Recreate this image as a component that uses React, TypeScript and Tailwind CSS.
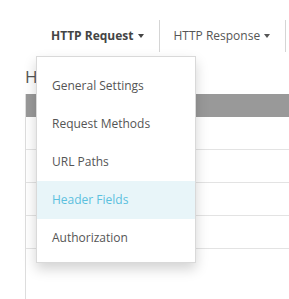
import React from "react";

const items = [
  "General Settings",
  "Request Methods",
  "URL Paths",
  "Header Fields",
  "Authorization",
];

function Caret() {
  return (
    <span className="ml-[4px] inline-block h-0 w-0 shrink-0 border-x-[3.5px] border-t-[4px] border-x-transparent border-t-current" />
  );
}

export default function App() {
  return (
    <div
      className="relative h-[299px] w-[289px] overflow-hidden bg-white text-[#555]"
      style={{ fontFamily: '"Open Sans", "Noto Sans", sans-serif' }}
    >
      <nav className="flex pl-[36px] pt-[20px]">
        <div className="relative shrink-0">
          <div className="flex h-[32px] items-center whitespace-nowrap pl-[15px] pr-[15px] text-[12px] font-bold text-[#444]">
            HTTP Request
            <Caret />
          </div>
          <div className="absolute left-0 top-[36px] z-10 w-[160px] border border-black/15 bg-white pb-[5px] pt-[10px] shadow-[0_6px_12px_rgba(0,0,0,0.175)]">
            {items.map((label) => (
              <div
                key={label}
                className={[
                  "flex h-[38px] items-center whitespace-nowrap px-[15px] text-[12px]",
                  label === "Header Fields"
                    ? "bg-[#e8f5f9] text-[#5bc0de]"
                    : "text-[#555]",
                ].join(" ")}
              >
                {label}
              </div>
            ))}
          </div>
        </div>
        <div className="flex h-[32px] shrink-0 items-center whitespace-nowrap border-l border-[#d5d5d5] pl-[14px] pr-[15px] text-[12px] text-[#555]">
          HTTP Response
          <Caret />
        </div>
        <div className="h-[32px] shrink-0 border-l border-[#d5d5d5]" />
      </nav>

      <div className="pl-[25px] pt-[13px]">
        <h1 className="whitespace-nowrap text-[17px] font-normal leading-[24px] text-[#555]">
          Header Fields
        </h1>
        <div className="mt-[5px] border-l border-[#ddd]">
          <div className="h-[23px] bg-[#999]" />
          {[0, 1, 2, 3].map((i) => (
            <div key={i} className="h-[33px] border-b border-[#e3e3e3]" />
          ))}
          <div className="h-[60px]" />
        </div>
      </div>
    </div>
  );
}
